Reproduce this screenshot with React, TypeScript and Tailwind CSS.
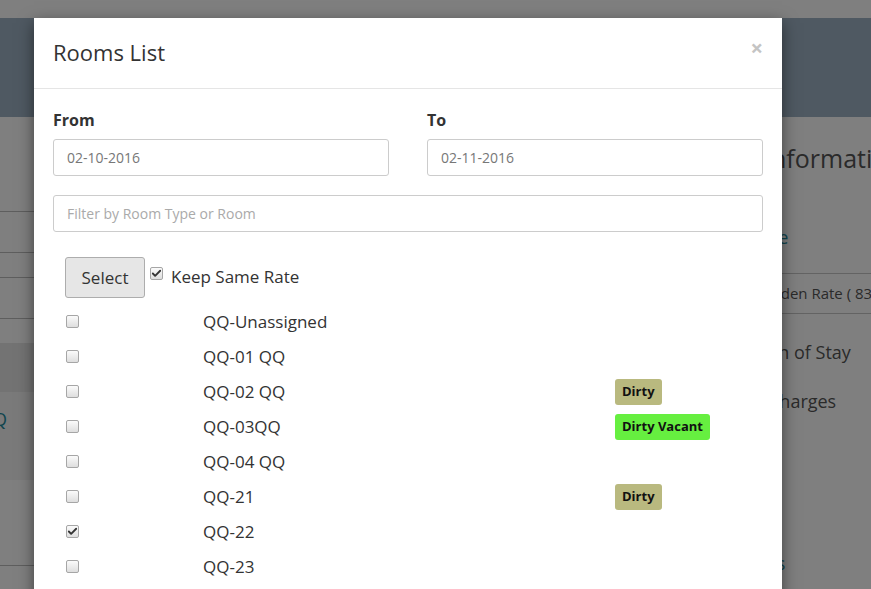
import { Check } from "lucide-react";

const rooms = [
  { name: "QQ-Unassigned", checked: false, status: "" },
  { name: "QQ-01 QQ", checked: false, status: "" },
  { name: "QQ-02 QQ", checked: false, status: "Dirty" },
  { name: "QQ-03QQ", checked: false, status: "Dirty Vacant" },
  { name: "QQ-04 QQ", checked: false, status: "" },
  { name: "QQ-21", checked: false, status: "Dirty" },
  { name: "QQ-22", checked: true, status: "" },
  { name: "QQ-23", checked: false, status: "" },
];

const Box = ({ checked }: { checked: boolean }) => (
  <span className="flex h-[13px] w-[13px] items-center justify-center rounded-[2px] border border-[#a6a6a6] bg-gradient-to-b from-[#fbfbfb] to-[#dedede]">
    {checked && <Check size={11} strokeWidth={4} className="text-[#333]" />}
  </span>
);

const Badge = ({ status }: { status: string }) => {
  if (!status) return null;
  const color = status === "Dirty Vacant" ? "bg-[#66ef40]" : "bg-[#b9b97f]";
  return (
    <span className={`inline-flex h-[26px] items-center rounded-[3px] px-[7px] text-[13px] font-bold text-[#111] ${color}`}>
      {status}
    </span>
  );
};

const BackgroundPage = () => (
  <div className="flex h-full flex-col bg-white text-[#555]">
    <div className="h-[18px]" />
    <div className="h-[99px] bg-[#9eb2c4]" />
    <div className="flex flex-1">
      <div className="w-[120px] pt-[94px]">
        <div className="h-[41px] border-t border-[#bcbcbc]" />
        <div className="h-[25px] border-t border-[#bcbcbc]" />
        <div className="h-[41px] border-t border-[#bcbcbc]" />
        <div className="h-[25px] border-t border-[#bcbcbc]" />
        <div className="h-[49px] bg-[#e6e6e6]" />
        <div className="h-[88px] bg-[#f4f4f4] pt-[14px] text-[18px] text-[#1f8a9c]">
          <span className="-ml-[7px]">Q</span>
        </div>
        <div className="h-[85px]" />
        <div className="border-t border-[#bcbcbc]" />
      </div>
      <div className="ml-auto w-[171px] whitespace-nowrap">
        <div className="mt-[24px] pl-[64px] text-[25px] leading-[34px]">Information</div>
        <div className="mt-[49px] pl-[25px] text-[18px] leading-[26px] text-[#1f8a9c]">Change</div>
        <div className="mt-[23px] h-[41px] border-y border-[#c6c6c6] pl-[57px] text-[15px] leading-[39px]">
          Golden Rate ( 834 )
        </div>
        <div className="mt-[25px] pl-[15px] text-[18px] leading-[26px]">Duration of Stay</div>
        <div className="mt-[23px] pl-[68px] text-[18px] leading-[26px]">Charges</div>
        <div className="mt-[136px] pl-[28px] text-[18px] leading-[26px] text-[#1f8a9c]">Details</div>
      </div>
    </div>
  </div>
);

export default function App() {
  return (
    <div className="relative h-[589px] w-[871px] overflow-hidden font-['Open_Sans',sans-serif]">
      <BackgroundPage />
      <div className="absolute inset-0 bg-black/50" />
      <div className="absolute left-[34px] top-[18px] h-[600px] w-[748px] bg-white shadow-[0_5px_15px_rgba(0,0,0,0.5)]">
        <div className="flex h-[71px] items-center justify-between border-b border-[#e5e5e5] px-[19px]">
          <h4 className="mb-[2px] text-[22px] text-[#333]">Rooms List</h4>
          <span className="mb-[12px] text-[22px] font-bold leading-none text-[#c4c4c4]">×</span>
        </div>
        <div className="px-[19px] pt-[20px]">
          <div className="grid grid-cols-2 gap-[38px]">
            <div>
              <label className="block text-[16px] font-bold leading-[22px] text-[#333]">From</label>
              <div className="mt-[8px] flex h-[37px] items-center rounded-[3px] border border-[#ccc] px-[13px] text-[14px] text-[#777]">
                02-10-2016
              </div>
            </div>
            <div>
              <label className="block text-[16px] font-bold leading-[22px] text-[#333]">To</label>
              <div className="mt-[8px] flex h-[37px] items-center rounded-[3px] border border-[#ccc] px-[13px] text-[14px] text-[#777]">
                02-11-2016
              </div>
            </div>
          </div>
          <div className="mt-[19px] flex h-[37px] items-center rounded-[3px] border border-[#ccc] px-[13px] text-[14px] text-[#aaa]">
            Filter by Room Type or Room
          </div>
          <div className="mt-[25px] flex items-start pl-[12px]">
            <button className="h-[41px] w-[80px] rounded-[3px] border border-[#adadad] bg-[#e6e6e6] text-[17px] text-[#333]">
              Select
            </button>
            <span className="ml-[5px] mt-[10px]">
              <Box checked />
            </span>
            <span className="ml-[8px] mt-[8px] text-[17px] leading-[24px] text-[#333]">Keep Same Rate</span>
          </div>
          <div className="mt-[6px]">
            {rooms.map((r) => (
              <div key={r.name} className="grid h-[35px] grid-cols-[150px_412px_1fr] items-center">
                <div className="pl-[13px]">
                  <Box checked={r.checked} />
                </div>
                <div className="text-[17px] text-[#333]">{r.name}</div>
                <div>
                  <Badge status={r.status} />
                </div>
              </div>
            ))}
          </div>
        </div>
      </div>
    </div>
  );
}
